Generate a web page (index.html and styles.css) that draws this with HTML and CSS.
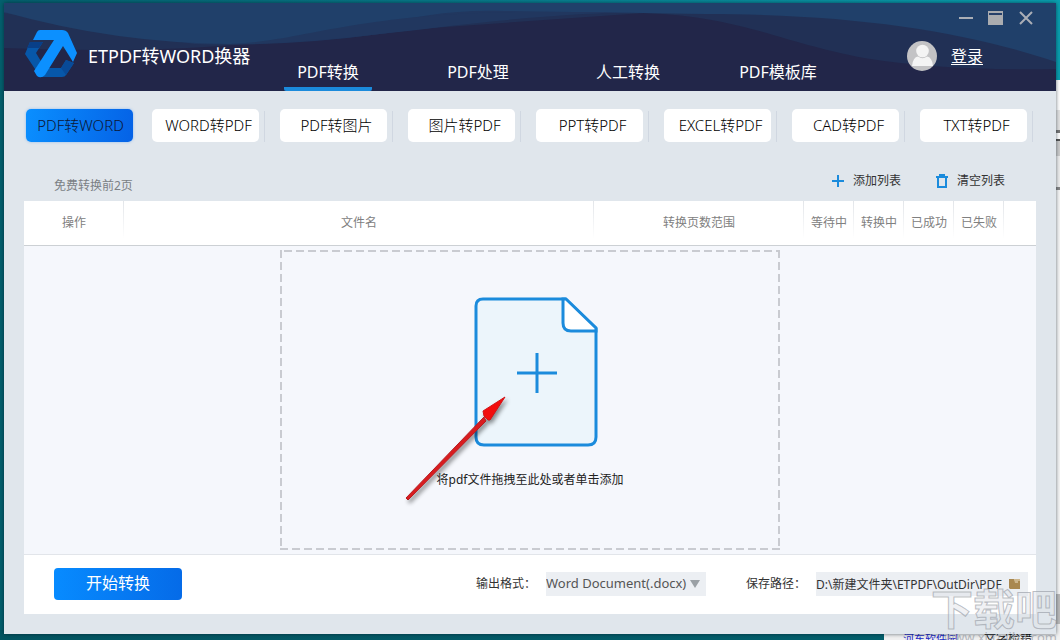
FILE: index.html
```html
<!DOCTYPE html>
<html lang="zh-CN">
<head>
<meta charset="utf-8">
<title>ETPDF转WORD换器</title>
<link rel="stylesheet" href="styles.css">
</head>
<body>
<div class="desktop" aria-hidden="true">
  <div class="desktop-side"></div>
  <div class="desktop-foot"><span class="desktop-link">河东软件园</span><span>文字检错</span></div>
</div>
<div class="window">
  <header class="header">
    <svg class="waves" viewBox="0 0 1052 88" preserveAspectRatio="none" aria-hidden="true">
      <path fill="#213055" d="M0 0H1052V66Q940 68 860 55C770 38 740 14 640 10L300 34Q180 52 0 45Z"/>
      <path fill="#21375f" d="M0 0H660L620 10C530 10 440 24 376 31Q280 44 190 41L0 10Z"/>
      <path fill="#20406a" d="M0 0H1052V59C960 28 850 11 700 11L500 8C400 4 330 41 226 41Q110 40 0 9Z"/>
      <path fill="#21375f" d="M226 41C300 38 350 10 520 9L640 9C540 10 440 24 376 31Q290 41 226 41Z"/>
    </svg>
    <div class="brand">
      <svg class="logo" viewBox="0 0 52 48" aria-hidden="true">
        <path fill="#0757a9" d="M5 12H18L11 23L17 33L12 42L0 24Z"/>
        <path fill="#083f88" d="M5 12H18L14 18H2Z"/>
        <path fill="#0757a9" d="M20 38H36L41 30L49 33L41 45Q40 47 37 47H15Z"/>
        <path fill="#084a98" d="M36 38L41 30L49 33L41 45Z"/>
        <path fill="#0c90ff" d="M15 0H37Q41 0 43 3L52 23L48 32L38 16L20 45Q16 49 12 46L9 41L29 10H8L12 2Q13 0 15 0Z"/>
      </svg>
      <h1 class="title">ETPDF转WORD换器</h1>
    </div>
    <nav class="nav">
      <a class="nav-item active" href="#convert">PDF转换</a>
      <a class="nav-item" href="#process">PDF处理</a>
      <a class="nav-item" href="#manual">人工转换</a>
      <a class="nav-item" href="#templates">PDF模板库</a>
    </nav>
    <div class="account">
      <div class="controls">
        <button class="control" type="button" aria-label="最小化"><svg width="16" height="16" viewBox="0 0 16 16"><path d="M1 8H15" stroke="#aaaeb6" stroke-width="2"/></svg></button>
        <button class="control" type="button" aria-label="最大化"><svg width="16" height="16" viewBox="0 0 16 16"><path d="M0 1H15V15H0Z" fill="#aaacb0"/><path d="M1 4H14" stroke="#26406a" stroke-width="2"/></svg></button>
        <button class="control" type="button" aria-label="关闭"><svg width="16" height="16" viewBox="0 0 16 16"><path d="M2 2L14 14M14 2L2 14" stroke="#aaaeb6" stroke-width="2"/></svg></button>
      </div>
      <div class="login">
        <svg width="30" height="30" viewBox="0 0 30 30" aria-hidden="true"><circle cx="15" cy="15" r="15" fill="#c3c3c5"/><circle cx="15.500" cy="10" r="6.300" fill="#f4f4f4"/><path d="M5 25Q6 16 11 15.500Q15.500 19 20 15.500Q25 16 26 25Z" fill="#f4f4f4"/></svg>
        <a class="login-link" href="#login">登录</a>
      </div>
    </div>
  </header>

  <ul class="tabs">
    <li class="tab-cell first"><button class="tab selected" type="button">PDF转WORD</button></li>
    <li class="tab-cell"><button class="tab" type="button">WORD转PDF</button></li>
    <li class="tab-cell"><button class="tab" type="button">PDF转图片</button></li>
    <li class="tab-cell"><button class="tab" type="button">图片转PDF</button></li>
    <li class="tab-cell"><button class="tab" type="button">PPT转PDF</button></li>
    <li class="tab-cell"><button class="tab" type="button">EXCEL转PDF</button></li>
    <li class="tab-cell"><button class="tab" type="button">CAD转PDF</button></li>
    <li class="tab-cell"><button class="tab" type="button">TXT转PDF</button></li>
  </ul>

  <div class="toolbar">
    <p class="hint">免费转换前2页</p>
    <div class="actions">
      <button class="action" type="button"><svg width="14" height="14" viewBox="0 0 14 14" aria-hidden="true"><path d="M1 7H13M7 1V13" stroke="#1b8bdc" stroke-width="2"/></svg>添加列表</button>
      <button class="action" type="button"><svg width="14" height="14" viewBox="0 0 14 14" aria-hidden="true"><path d="M1 3H13M4 1H10M3 3V13H11V3" fill="none" stroke="#1b8bdc" stroke-width="2"/></svg>清空列表</button>
    </div>
  </div>

  <main class="panel">
    <table class="files">
      <colgroup><col class="c-op"><col><col class="c-range"><col class="c-state"><col class="c-state"><col class="c-state"><col class="c-state"><col class="c-end"></colgroup>
      <thead><tr><th>操作</th><th>文件名</th><th>转换页数范围</th><th>等待中</th><th>转换中</th><th>已成功</th><th>已失败</th><td></td></tr></thead>
    </table>
    <div class="stage">
      <button class="drop" type="button">
        <svg class="sheet" width="124" height="150" viewBox="0 0 124 150" aria-hidden="true">
          <path d="M9 2H91L122 32V140Q122 148 114 148H10Q2 148 2 140V9Q2 2 9 2Z" fill="#ecf5fb" stroke="#1b8bdc" stroke-width="3"/>
          <path d="M89 2V26Q89 34 97 34H122V31L92 2Z" fill="#fff" stroke="#1b8bdc" stroke-width="3"/>
          <path d="M43 76H83M63 56V96" stroke="#1b8bdc" stroke-width="3"/>
        </svg>
        <span class="drop-text">将pdf文件拖拽至此处或者单击添加</span>
        <svg class="arrow" width="110" height="112" viewBox="0 0 110 112" aria-hidden="true">
          <path d="M4 104L82 23L84 27L6 106Z" fill="#d91c1f" stroke="#b51b20"/>
          <path d="M103 3L81 17L82 22L86 26L88 26Z" fill="#f20d0d" stroke="#d01418"/>
        </svg>
      </button>
    </div>
    <footer class="footer">
      <button class="start" type="button">开始转换</button>
      <div class="field format-field">
        <label for="format">输出格式：</label>
        <span class="select-box"><select id="format" class="format"><option>Word Document(.docx)</option></select></span>
      </div>
      <div class="field">
        <label for="path">保存路径：</label>
        <span class="path-box"><input id="path" class="path" type="text" value="D:\新建文件夹\ETPDF\OutDir\PDF"><button class="browse" type="button" aria-label="浏览"><svg width="12" height="12" viewBox="0 0 12 12"><path d="M0 1H5L6 3H11V11H1L0 10Z" fill="#a98850"/><path d="M5 1H11V3H9V5H6Z" fill="#cdb68c"/></svg></button></span>
      </div>
    </footer>
  </main>
</div>
<div class="watermark" aria-hidden="true"><span class="mark">下载吧</span><span class="mark-url">www.xiazaiba.com</span></div>
</body>
</html>
```
FILE: styles.css
```css
* { box-sizing: border-box; }

body {
  margin: 0;
  min-height: 100vh;
  padding: 3px 4px 6px;
  display: flex;
  flex-direction: column;
  position: relative;
  overflow: hidden;
  background: linear-gradient(90deg, #04606e, #087e8e 50%, #0aa0b0);
  font-family: "Noto Sans", "Noto Sans CJK SC", sans-serif;
  font-size: 12px;
  line-height: 16px;
  color: #333;
}

button, select, input {
  font: inherit;
  color: inherit;
  border: 0;
  margin: 0;
  padding: 0;
  background: none;
}

.desktop { position: absolute; inset: 0; }
.desktop-side {
  position: absolute;
  top: 80px;
  right: 0;
  bottom: 0;
  width: 8px;
  background: linear-gradient(#fff 0 30px, #e4e4e4 30px 50px, #777 50px 53px, #fff 53px 59px, #555 59px 61px, #ccc 61px 76px, #eee 76px 107px, #888 107px 110px, #f7f7f7 110px 514px, #bbb 514px 544px, #eee 544px);
}
.desktop-foot {
  position: absolute;
  left: 0;
  right: 0;
  bottom: 0;
  height: 10px;
  padding-right: 28px;
  overflow: hidden;
  display: flex;
  justify-content: flex-end;
  gap: 26px;
  line-height: 18px;
  color: #111;
  background: linear-gradient(90deg, #045561, #035f6c 100%) left / calc(100% - 176px) 100% no-repeat #f1f1f1;
}
.desktop-link { color: #2029c8; font-size: 11px; }

.window {
  position: relative;
  flex: 1;
  display: flex;
  flex-direction: column;
  padding-bottom: 20px;
  background: #e0e6ec;
  box-shadow: 0 0 4px rgba(0, 20, 30, 0.6);
}

.header {
  position: relative;
  height: 88px;
  display: flex;
  background: #222649;
  color: #fff;
}
.waves { position: absolute; inset: 0; width: 100%; height: 100%; }
.brand, .nav, .account { position: relative; }
.brand {
  width: 280px;
  padding: 26px 0 0 21px;
  display: flex;
  align-items: flex-start;
  gap: 11px;
}
.logo { width: 52px; height: 50px; }
.title { margin: 0; padding-top: 14px; font-size: 18px; line-height: 26px; font-weight: 400; white-space: nowrap; }

.nav { display: flex; align-items: flex-end; gap: 62px; }
.nav-item {
  width: 88px;
  padding-bottom: 3px;
  border-bottom: 4px solid transparent;
  font-size: 16px;
  line-height: 24px;
  text-align: center;
  color: #fff;
  text-decoration: none;
  white-space: nowrap;
}
.nav-item.active { border-color: #1b8bdc; border-radius: 2px; }

.account {
  margin-left: auto;
  padding: 7px 22px 0 0;
  display: flex;
  flex-direction: column;
}
.controls { display: flex; gap: 14px; justify-content: flex-end; }
.control { width: 16px; height: 16px; }
.control svg { display: block; }
.login { display: flex; align-items: center; gap: 14px; padding-top: 15px; }
.login-link { color: #fff; font-size: 16px; line-height: 24px; text-underline-offset: 2px; margin-right: 51px; }

.tabs {
  list-style: none;
  margin: 0;
  padding: 18px 8px 0 20px;
  display: grid;
  grid-template-columns: repeat(8, 1fr);
}
.tab-cell { position: relative; padding-right: 21px; }
.tab-cell.first { padding: 0 19px 0 2px; }
.tab-cell:not(.first)::after {
  content: "";
  position: absolute;
  top: 2px;
  right: 15px;
  width: 1px;
  height: 31px;
  background: #d0d7e1;
}
.tab {
  width: 100%;
  height: 33px;
  padding: 0 0 2px 6px;
  border-radius: 5px;
  background: #fff;
  color: #000;
  font-size: 15px;
  font-weight: 300;
  line-height: 20px;
  white-space: nowrap;
}
.tab.selected { padding-left: 2px; background: linear-gradient(100deg, #0a8fff, #0562e6); box-shadow: 0 0 3px #8fbbee; color: #0d1734; }

.toolbar {
  display: flex;
  justify-content: space-between;
  align-items: flex-start;
  height: 59px;
  padding: 31px 51px 0 50px;
}
.hint { margin: 0; padding-top: 5px; color: #7b7f84; }
.actions { display: flex; gap: 34px; }
.action { display: flex; align-items: center; gap: 8px; height: 16px; }

.panel {
  flex: 1;
  display: flex;
  flex-direction: column;
  margin: 0 20px;
  background: #fff;
}
.files { width: 100%; table-layout: fixed; border-collapse: collapse; border-bottom: 1px solid #ccd0d4; }
.c-op { width: 100px; }
.c-range { width: 210px; }
.c-state { width: 50px; }
.c-end { width: 32px; }
.files th {
  height: 44px;
  padding: 0;
  font-weight: 400;
  color: #808080;
  background: linear-gradient(#e2e5e9, #fff) right top / 1px 38px no-repeat;
}

.stage {
  flex: 1;
  display: flex;
  justify-content: center;
  padding: 4px 0;
  background: #f5f7fc;
  border-bottom: 1px solid #e2e5ea;
}
.drop {
  --dash: #c9cbd1;
  position: relative;
  width: 500px;
  min-height: 300px;
  display: flex;
  flex-direction: column;
  align-items: center;
  padding-top: 47px;
  color: #222;
  background:
    repeating-linear-gradient(90deg, transparent 0 4px, var(--dash) 4px 12px) top / 100% 2px no-repeat,
    repeating-linear-gradient(90deg, var(--dash) 0 8px, transparent 8px 12px) bottom / 100% 2px no-repeat,
    repeating-linear-gradient(var(--dash) 0 8px, transparent 8px 12px) left / 2px 100% no-repeat,
    repeating-linear-gradient(var(--dash) 0 8px, transparent 8px 12px) right / 2px 100% no-repeat;
}
.sheet { margin-left: 12px; }
.drop-text { margin-top: 25px; }
.arrow { position: absolute; left: 122px; top: 144px; filter: drop-shadow(2px 3px 2px rgba(0, 0, 0, 0.45)); }

.footer { display: flex; align-items: center; height: 59px; padding: 0 8px 2px 30px; }
.start {
  width: 128px;
  height: 32px;
  padding-bottom: 2px;
  border-radius: 4px;
  color: #fff;
  font-size: 16px;
  line-height: 24px;
  background: linear-gradient(90deg, #078bff, #056be8);
}
.field { display: flex; align-items: center; gap: 10px; }
.format-field { margin: 0 40px 0 auto; }
.select-box { position: relative; width: 160px; height: 24px; background: #eceff3; }
.select-box::after {
  content: "";
  position: absolute;
  right: 6px;
  top: 8px;
  border: 5px solid transparent;
  border-top: 8px solid #9aa0a5;
  border-bottom: 0;
  pointer-events: none;
}
.format { width: 100%; height: 24px; padding-bottom: 2px; appearance: none; color: #555; font-size: 13px; }
.path-box { display: flex; align-items: center; width: 212px; height: 24px; background: #eceff3; }
.path { width: 193px; height: 24px; }
.browse { width: 12px; height: 12px; }
.browse svg { display: block; }

.watermark {
  position: absolute;
  right: 3px;
  bottom: -4px;
  display: flex;
  flex-direction: column;
  align-items: flex-end;
  pointer-events: none;
  white-space: nowrap;
}
.mark { font-size: 42px; line-height: 42px; font-weight: 700; color: rgba(225, 228, 233, 0.5); -webkit-text-stroke: 1px rgba(145, 150, 160, 0.6); }
.mark-url { font-size: 13px; line-height: 14px; color: rgba(150, 155, 165, 0.7); }
```
